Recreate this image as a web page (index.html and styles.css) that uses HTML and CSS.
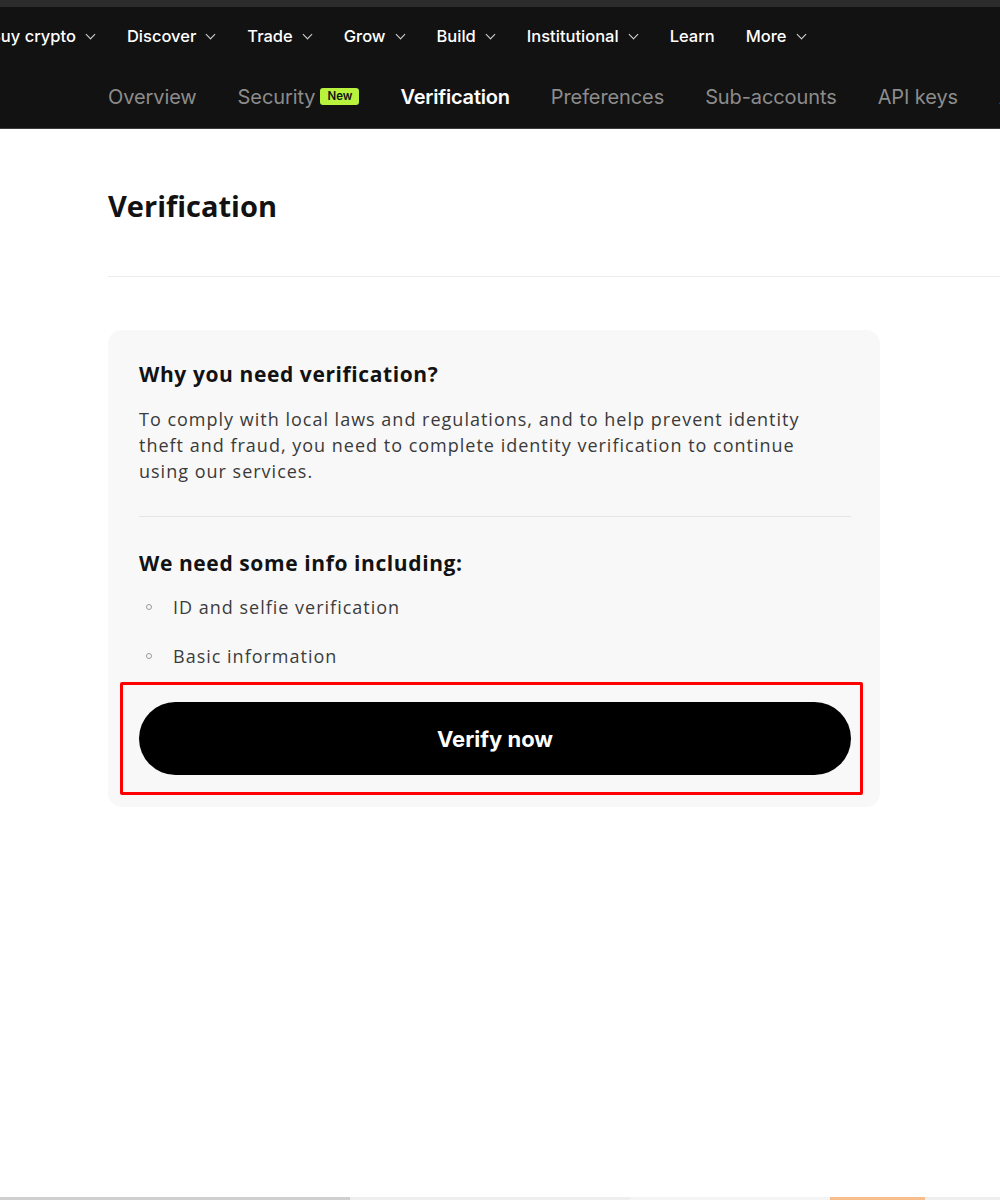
FILE: index.html
```html
<!DOCTYPE html>
<html lang="en">
<head>
  <meta charset="UTF-8" />
  <title>Verification</title>
  <link rel="stylesheet" href="styles.css">
</head>
<body>

  <div class="topstrip"></div>

  <header class="header">
    <nav class="mainnav" aria-label="Main">
      <a class="navitem">Buy crypto <span class="chev"></span></a>
      <a class="navitem">Discover <span class="chev"></span></a>
      <a class="navitem">Trade <span class="chev"></span></a>
      <a class="navitem">Grow <span class="chev"></span></a>
      <a class="navitem">Build <span class="chev"></span></a>
      <a class="navitem">Institutional <span class="chev"></span></a>
      <a class="navitem">Learn</a>
      <a class="navitem">More <span class="chev"></span></a>
    </nav>

    <nav class="subnav" aria-label="Account">
      <a class="subitem">Overview</a>
      <a class="subitem">Security <span class="badge">New</span></a>
      <a class="subitem active">Verification</a>
      <a class="subitem">Preferences</a>
      <a class="subitem">Sub-accounts</a>
      <a class="subitem">API keys</a>
      <a class="subitem">Authorized apps</a>
    </nav>
  </header>

  <main class="page">
    <h1 class="title">Verification</h1>
    <hr class="rule">

    <section class="card">
      <h2>Why you need verification?</h2>
      <p>To comply with local laws and regulations, and to help prevent identity theft and fraud, you need to complete identity verification to continue using our services.</p>

      <hr class="card-rule">

      <h2>We need some info including:</h2>
      <ul class="needs">
        <li>ID and selfie verification</li>
        <li>Basic information</li>
      </ul>

      <div class="action">
        <button type="button" class="verify">Verify now</button>
        <div class="highlight"></div>
      </div>
    </section>
  </main>

  <div class="scrollbar">
    <span class="seg seg-a"></span>
    <span class="seg seg-b"></span>
    <span class="seg seg-c"></span>
    <span class="seg seg-e"></span>
    <span class="seg seg-f"></span>
  </div>

</body>
</html>
```

FILE: styles.css
```css
html, body {
  margin: 0;
  padding: 0;
  background: #ffffff;
  overflow: hidden;
}
body {
  font-family: 'Open Sans', 'Noto Sans', sans-serif;
  color: #121212;
  width: 1000px;
  height: 1200px;
}

/* Kopfbereich */
.topstrip {
  height: 7px;
  background: #2c2c2c;
}
.header {
  background: #121212;
  height: 121px;
  border-bottom: 1px solid #3a3a3a;
  font-family: Inter, 'Noto Sans', sans-serif;
  overflow: hidden;
}
.mainnav {
  display: flex;
  align-items: center;
  height: 58px;
  margin-left: -10px;
  white-space: nowrap;
}
.navitem {
  display: flex;
  align-items: center;
  gap: 9px;
  color: #ffffff;
  font-size: 16.5px;
  font-weight: 500;
  margin-right: 31px;
}
.navitem:last-child {
  margin-right: 0;
}
.chev {
  width: 6px;
  height: 6px;
  border-right: 1.5px solid #d8d8d8;
  border-bottom: 1.5px solid #d8d8d8;
  transform: rotate(45deg);
  margin-top: -4px;
  margin-left: 2px;
  margin-right: 2px;
}
.subnav {
  display: flex;
  align-items: center;
  height: 63px;
  padding-left: 108px;
  gap: 41px;
  white-space: nowrap;
}
.subitem {
  display: flex;
  align-items: center;
  gap: 5px;
  color: #8c8c8c;
  font-size: 20px;
  letter-spacing: -0.1px;
}
.subitem.active {
  color: #ffffff;
  font-weight: 600;
  letter-spacing: -0.2px;
}
.badge {
  background: #b9f23c;
  color: #121212;
  font-size: 11.5px;
  font-weight: 600;
  padding: 2px 7px;
  border-radius: 3px;
  line-height: 13px;
  letter-spacing: 0;
}

/* Inhalt */
.page {
  padding-left: 108px;
}
.title {
  margin: 0;
  padding-top: 58px;
  font-size: 29px;
  line-height: 38px;
  font-weight: 700;
  color: #121212;
}
.rule {
  border: none;
  border-top: 1px solid #ececec;
  margin: 51px 0 0 0;
}
.card {
  margin-top: 53px;
  width: 772px;
  box-sizing: border-box;
  background: #f8f8f8;
  border-radius: 14px;
  padding: 32px 29px 32px 31px;
}
.card h2 {
  margin: 0;
  font-size: 21px;
  line-height: 24px;
  font-weight: 700;
  letter-spacing: 0.6px;
  color: #121212;
}
.card p {
  margin: 20px 0 0 0;
  max-width: 690px;
  font-size: 18px;
  line-height: 26px;
  letter-spacing: 1px;
  color: #3a3a3a;
}
.card-rule {
  border: none;
  border-top: 1px solid #e4e4e4;
  margin: 32px 0 34px 0;
}
.needs {
  list-style: none;
  margin: 19px 0 0 0;
  padding: 0;
}
.needs li {
  display: flex;
  align-items: center;
  font-size: 18px;
  line-height: 26px;
  letter-spacing: 1px;
  color: #3d3d3d;
  margin-bottom: 23px;
}
.needs li:last-child {
  margin-bottom: 0;
}
.needs li::before {
  content: "";
  width: 4px;
  height: 4px;
  border: 1.5px solid #9a9a9a;
  border-radius: 50%;
  margin-left: 7px;
  margin-right: 21px;
}
.action {
  position: relative;
  margin-top: 33px;
}
.verify {
  display: block;
  width: 100%;
  height: 73px;
  border: none;
  border-radius: 37px;
  background: #000000;
  color: #ffffff;
  font-family: Inter, 'Noto Sans', sans-serif;
  font-size: 22px;
  font-weight: 700;
  cursor: pointer;
}
/* rote Markierung */
.highlight {
  position: absolute;
  top: -20px;
  bottom: -20px;
  left: -19px;
  right: -12px;
  border: 3px solid #ff0000;
  border-radius: 2px;
  pointer-events: none;
}

/* Scrollleiste unten */
.scrollbar {
  position: fixed;
  left: 0;
  right: 0;
  bottom: 0;
  height: 3px;
  display: flex;
}
.seg { display: block; height: 3px; }
.seg-a { width: 350px; background: #cfcfcf; }
.seg-b { width: 280px; background: #eeeeee; }
.seg-c { width: 200px; background: #f4f4f4; }
.seg-e { width: 95px; background: #f8bd8c; }
.seg-f { flex: 1; background: #eeeeee; }
```
